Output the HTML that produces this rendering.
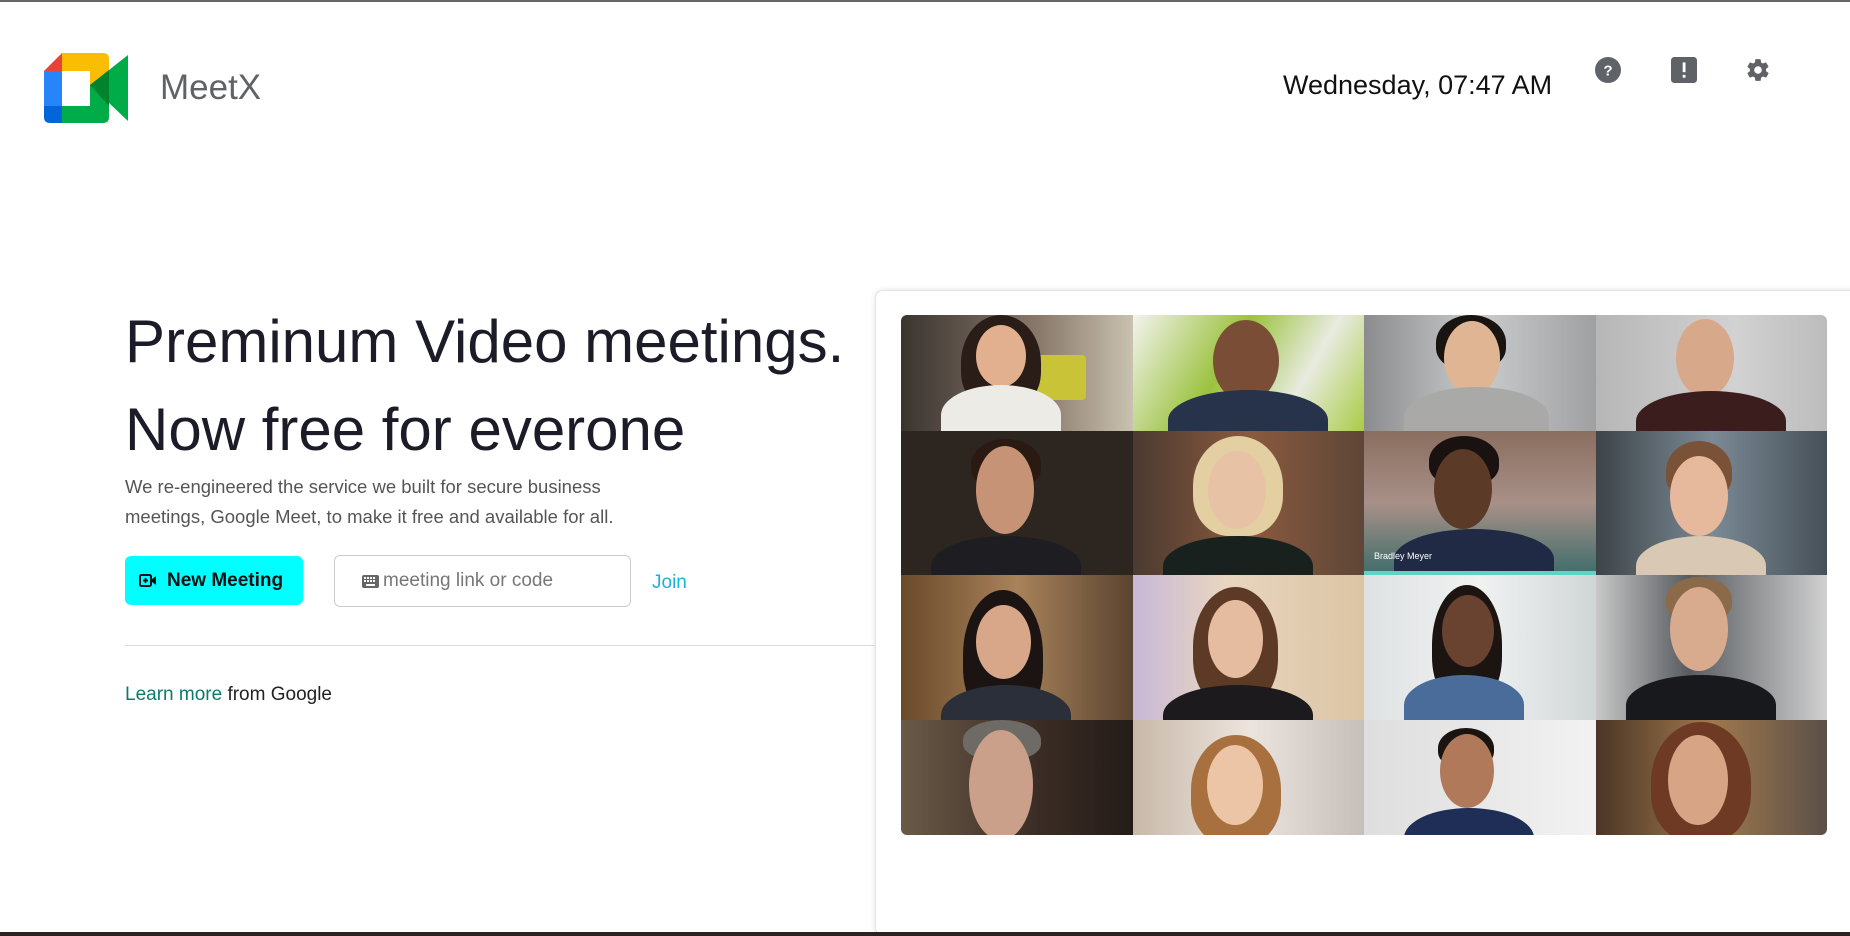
<!DOCTYPE html>
<html><head><meta charset="utf-8"><style>
*{margin:0;padding:0;box-sizing:border-box}
body{width:1850px;height:936px;overflow:hidden;background:#fff;font-family:"Segoe UI","Liberation Sans",sans-serif;position:relative}
.topline{position:absolute;left:0;top:0;width:1850px;height:2px;background:#666}
.bottom{position:absolute;left:0;top:932px;width:1850px;height:4px;background:#2b2323}
.abs{position:absolute}
.meetx{left:160px;top:68px;font-size:35px;color:#5f6368}
.date{left:1283px;top:70px;font-size:27px;color:#111}
.head{left:125px;font-size:60px;color:#1c1c28;line-height:1}
.para{left:125px;top:472px;font-size:18.5px;color:#555;line-height:30px}
.btn{left:125px;top:556px;width:178px;height:49px;background:#00ffff;border-radius:6px;font-size:19px;font-weight:600;color:#111;display:flex;align-items:center;padding-left:14px}
.inp{left:334px;top:555px;width:297px;height:52px;border:1px solid #ccc;border-radius:6px;font-size:19px;color:#777;display:flex;align-items:center;padding-left:27px}
.join{left:652px;top:572px;font-size:19px;color:#1ab0e0}
.hr{left:125px;top:645px;width:750px;height:1px;background:#ddd}
.learn{left:125px;top:684px;font-size:19px;color:#222}
.learn span{color:#0f7a6c}
.card{left:875px;top:290px;width:990px;height:646px;background:#fff;border:1px solid #e4e4e4;border-radius:8px;box-shadow:0 0 6px rgba(0,0,0,.12)}
.grid{left:901px;top:315px;width:926px;height:520px;border-radius:6px;overflow:hidden;display:grid;grid-template-columns:repeat(4,1fr);grid-template-rows:116px 144px 145px 115px}
.t{position:relative;overflow:hidden}
.t i{position:absolute;display:block}
.hair{border-radius:50% 50% 40% 40%}
.face{border-radius:50%}
.body{border-radius:50% 50% 0 0}
</style></head><body>
<div class="topline"></div>
<svg class="abs" style="left:44px;top:53px" width="84" height="70" viewBox="0 0 84 70">
<path d="M18 0 L0 18 L18 18Z" fill="#ea4335"/>
<path d="M18 0 H59 Q65 0 65 6 V32 L46 32 V18 H18Z" fill="#fbbc04"/>
<rect x="0" y="18" width="18" height="35" fill="#2684fc"/>
<path d="M0 53 H18 V70 H6 Q0 70 0 64Z" fill="#0066da"/>
<path d="M18 53 H46 V32 H65 V64 Q65 70 59 70 H18Z" fill="#00ac47"/>
<path d="M46 32 L84 2 V68 Z" fill="#00ac47"/>
<path d="M46 32 L65 17 V53 Z" fill="#00832d"/>
</svg>
<div class="abs meetx">MeetX</div>
<div class="abs date">Wednesday, 07:47 AM</div>
<svg class="abs" style="left:1595px;top:57px" width="26" height="26" viewBox="0 0 24 24"><circle cx="12" cy="12" r="12" fill="#5f6368"/><text x="12" y="17" font-size="14" font-weight="bold" text-anchor="middle" fill="#fff" font-family="Liberation Sans">?</text></svg>
<svg class="abs" style="left:1671px;top:57px" width="26" height="26" viewBox="0 0 24 24"><rect width="24" height="24" rx="3" fill="#5f6368"/><rect x="10.8" y="5" width="2.6" height="9" fill="#fff"/><rect x="10.8" y="16.5" width="2.6" height="2.6" fill="#fff"/></svg>
<svg class="abs" style="left:1745px;top:57px" width="26" height="26" viewBox="0 0 24 24"><path fill="#5f6368" d="M19.4 13c.04-.32.06-.66.06-1s-.02-.68-.06-1l2.1-1.650c.2-.15.24-.42.12-.64l-2-3.46c-.12-.22-.39-.3-.61-.22l-2.49 1c-.52-.4-1.08-.73-1.690-.98l-.38-2.650A.49.49 0 0014 2h-4c-.25 0-.46.18-.49.42l-.38 2.650c-.61.25-1.17.59-1.690.98l-2.49-1c-.23-.09-.49 0-.61.22l-2 3.46c-.13.22-.07.49.12.64L4.57 11c-.04.32-.07.66-.07 1s.03.68.07 1l-2.11 1.650c-.19.15-.24.42-.12.64l2 3.46c.12.22.39.3.61.22l2.49-1c.52.4 1.08.73 1.690.98l.38 2.650c.03.24.24.42.49.42h4c.25 0 .46-.18.49-.42l.38-2.650c.61-.25 1.17-.59 1.690-.98l2.49 1c.23.09.49 0 .61-.22l2-3.46c.12-.22.07-.49-.12-.64L19.4 13zM12 15.5A3.5 3.5 0 1112 8.5a3.5 3.5 0 010 7z"/></svg>
<div class="abs head" style="top:312px">Preminum Video meetings.</div>
<div class="abs head" style="top:400px">Now free for everone</div>
<div class="abs para">We re-engineered the service we built for secure business<br>meetings, Google Meet, to make it free and available for all.</div>
<div class="abs btn"><svg width="18" height="16" viewBox="0 0 18 16" style="margin-right:10px"><rect x="1" y="2" width="11" height="11" rx="1.5" fill="none" stroke="#111" stroke-width="2"/><path d="M6.5 5v5M4 7.5h5" stroke="#111" stroke-width="1.8"/><path d="M13 6l4-3v9l-4-3z" fill="#111"/></svg>New Meeting</div>
<div class="abs inp"><svg width="17" height="13" viewBox="0 0 17 13" style="margin-right:4px"><rect width="17" height="13" rx="2" fill="#666"/><g fill="#fff"><rect x="2" y="2" width="2" height="2"/><rect x="5" y="2" width="2" height="2"/><rect x="8" y="2" width="2" height="2"/><rect x="11" y="2" width="2" height="2"/><rect x="2" y="5" width="2" height="2"/><rect x="5" y="5" width="2" height="2"/><rect x="8" y="5" width="2" height="2"/><rect x="11" y="5" width="2" height="2"/><rect x="4" y="9" width="9" height="2"/></g></svg>meeting link or code</div>
<div class="abs join">Join</div>
<div class="abs hr"></div>
<div class="abs learn"><span>Learn more</span> from Google</div>
<div class="abs card"></div>
<div class="abs grid">
<div class="t" style="background:linear-gradient(90deg,#3a3430,#8a7a6c 60%,#c9c2b0)"><i style="left:135px;top:40px;width:50px;height:45px;background:#c9c437;border-radius:4px"></i><i class="hair" style="left:60px;top:0;width:80px;height:95px;background:#2a1c16"></i><i class="face" style="left:75px;top:10px;width:50px;height:62px;background:#e2b08e"></i><i class="body" style="left:40px;top:70px;width:120px;height:60px;background:#ecebe6"></i></div>
<div class="t" style="background:linear-gradient(120deg,#f3f3ee,#9bc23e 40%,#e8ebe0 70%,#a9cc44)"><i class="face" style="left:80px;top:5px;width:66px;height:82px;background:#7a4e36"></i><i class="body" style="left:35px;top:75px;width:160px;height:60px;background:#27334a"></i></div>
<div class="t" style="background:linear-gradient(90deg,#8a8c8e,#c9cbcc 50%,#9ea0a2)"><i class="hair" style="left:72px;top:0;width:70px;height:55px;background:#1a1411"></i><i class="face" style="left:80px;top:6px;width:56px;height:74px;background:#e0b594"></i><i class="body" style="left:40px;top:72px;width:145px;height:60px;background:#a9a9a7"></i></div>
<div class="t" style="background:linear-gradient(90deg,#b6b6b6,#d2d2d2 60%,#bcbcbc)"><i class="face" style="left:80px;top:4px;width:58px;height:78px;background:#d7a88a"></i><i class="body" style="left:40px;top:76px;width:150px;height:60px;background:#3c1d1d"></i></div>
<div class="t" style="background:#2d2520"><i class="hair" style="left:70px;top:8px;width:70px;height:50px;background:#2a1a12"></i><i class="face" style="left:75px;top:15px;width:58px;height:88px;background:#c79376"></i><i class="body" style="left:30px;top:105px;width:150px;height:60px;background:#1e1e22"></i></div>
<div class="t" style="background:linear-gradient(90deg,#4b3a30,#8a5a3e 50%,#5e4638)"><i class="hair" style="left:60px;top:5px;width:90px;height:100px;background:#e3cfa2"></i><i class="face" style="left:75px;top:20px;width:58px;height:78px;background:#e8c2a4"></i><i class="body" style="left:30px;top:105px;width:150px;height:60px;background:#18211e"></i></div>
<div class="t" style="background:linear-gradient(180deg,#8a6e60,#a89088 50%,#3e6d6a)"><i class="hair" style="left:65px;top:5px;width:70px;height:50px;background:#1a1210"></i><i class="face" style="left:70px;top:18px;width:58px;height:80px;background:#5b3a28"></i><i class="body" style="left:30px;top:98px;width:160px;height:60px;background:#202a45"></i><i style="left:0;top:140px;width:232px;height:4px;background:#5fd3c6"></i><span style="position:absolute;left:10px;top:120px;color:#fff;font-size:9px;font-family:'Liberation Sans'">Bradley Meyer</span></div>
<div class="t" style="background:linear-gradient(90deg,#3e4448,#7b8a96 50%,#465058)"><i class="hair" style="left:70px;top:10px;width:66px;height:60px;background:#7a5237"></i><i class="face" style="left:74px;top:25px;width:58px;height:80px;background:#e6b89c"></i><i class="body" style="left:40px;top:105px;width:130px;height:60px;background:#d9c9b4"></i></div>
<div class="t" style="background:linear-gradient(90deg,#6a4a2a,#a8825a 50%,#5a4430)"><i class="hair" style="left:62px;top:15px;width:80px;height:130px;background:#1c1412"></i><i class="face" style="left:75px;top:30px;width:55px;height:74px;background:#d8a688"></i><i class="body" style="left:40px;top:110px;width:130px;height:60px;background:#2b2f3a"></i></div>
<div class="t" style="background:linear-gradient(90deg,#c7b8d8,#e8d6c0 40%,#dcc4a4)"><i class="hair" style="left:60px;top:12px;width:85px;height:120px;background:#5c3a26"></i><i class="face" style="left:75px;top:25px;width:55px;height:78px;background:#e6bca0"></i><i class="body" style="left:30px;top:110px;width:150px;height:60px;background:#1c1a1c"></i></div>
<div class="t" style="background:linear-gradient(90deg,#dfe2e2,#f0f2f2 50%,#d0d6d6)"><i class="hair" style="left:68px;top:10px;width:70px;height:120px;background:#1c1410"></i><i class="face" style="left:78px;top:20px;width:52px;height:72px;background:#6a4230"></i><i class="body" style="left:40px;top:100px;width:120px;height:60px;background:#4a6c9a"></i></div>
<div class="t" style="background:linear-gradient(90deg,#c8c8c8,#585c60 40%,#d0d0d0)"><i class="hair" style="left:70px;top:2px;width:66px;height:45px;background:#8a6a48"></i><i class="face" style="left:74px;top:12px;width:58px;height:84px;background:#d8aa8e"></i><i class="body" style="left:30px;top:100px;width:150px;height:60px;background:#17191c"></i></div>
<div class="t" style="background:linear-gradient(90deg,#6a5a48,#3a2c24 60%,#241c18)"><i class="hair" style="left:62px;top:0;width:78px;height:40px;background:#6e6a66"></i><i class="face" style="left:68px;top:10px;width:64px;height:110px;background:#caa08a"></i></div>
<div class="t" style="background:linear-gradient(90deg,#c8b8a8,#ece4de 50%,#c6beb8)"><i class="hair" style="left:58px;top:15px;width:90px;height:110px;background:#a8703e"></i><i class="face" style="left:74px;top:25px;width:56px;height:80px;background:#ecc4a6"></i></div>
<div class="t" style="background:linear-gradient(90deg,#dedede,#f2f2f2)"><i class="hair" style="left:74px;top:8px;width:56px;height:40px;background:#1a1410"></i><i class="face" style="left:76px;top:14px;width:54px;height:74px;background:#b07a5a"></i><i class="body" style="left:40px;top:88px;width:130px;height:60px;background:#1e2e56"></i></div>
<div class="t" style="background:linear-gradient(90deg,#4a3626,#a0784c 50%,#5a5048)"><i class="hair" style="left:55px;top:2px;width:100px;height:120px;background:#6e3a24"></i><i class="face" style="left:72px;top:15px;width:60px;height:90px;background:#d8a486"></i></div>
</div>
<div class="bottom"></div>
</body></html>
